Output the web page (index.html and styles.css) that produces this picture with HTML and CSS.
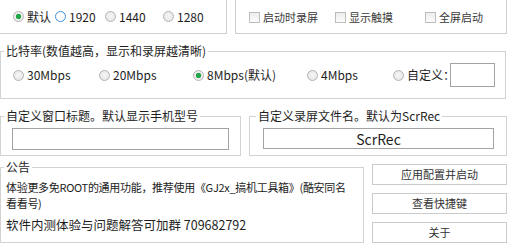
FILE: index.html
```html
<!DOCTYPE html>
<html lang="zh-CN">
<head>
<meta charset="utf-8">
<title>ScrRec</title>
<link rel="stylesheet" href="styles.css">
</head>
<body>
<div class="page">
  <div class="top">
    <div class="box box-res">
      <label class="opt res1"><span class="radio on"></span><span>默认</span></label>
      <label class="opt res2"><span class="radio focus"></span><span>1920</span></label>
      <label class="opt res3"><span class="radio"></span><span>1440</span></label>
      <label class="opt"><span class="radio"></span><span>1280</span></label>
    </div>
    <div class="box box-chk">
      <label class="opt chk1"><span class="check"></span><span>启动时录屏</span></label>
      <label class="opt chk2"><span class="check"></span><span>显示触摸</span></label>
      <label class="opt"><span class="check"></span><span>全屏启动</span></label>
    </div>
  </div>

  <fieldset class="group bitrate">
    <legend>比特率(数值越高，显示和录屏越清晰)</legend>
    <div class="bitrate-row">
      <label class="opt b1"><span class="radio"></span><span>30Mbps</span></label>
      <label class="opt b2"><span class="radio"></span><span>20Mbps</span></label>
      <label class="opt b3"><span class="radio on"></span><span>8Mbps(默认)</span></label>
      <label class="opt b4"><span class="radio"></span><span>4Mbps</span></label>
      <label class="opt b5"><span class="radio"></span><span>自定义：</span></label>
      <span class="field field-small"></span>
    </div>
  </fieldset>

  <div class="names">
    <fieldset class="group name-title">
      <legend>自定义窗口标题。默认显示手机型号</legend>
      <div class="field-wrap"><span class="field field-title"></span></div>
    </fieldset>
    <fieldset class="group name-file">
      <legend>自定义录屏文件名。默认为ScrRec</legend>
      <div class="field-wrap wide"><span class="field field-file">ScrRec</span></div>
    </fieldset>
  </div>

  <div class="bottom">
    <fieldset class="group notice">
      <legend>公告</legend>
      <div class="notice-body">
        <p class="small">体验更多免ROOT的通用功能，推荐使用《GJ2x_搞机工具箱》(酷安同名</p>
        <p class="small">看看号)</p>
        <p class="big">软件内测体验与问题解答可加群 709682792</p>
      </div>
    </fieldset>
    <div class="buttons">
      <button class="btn">应用配置并启动</button>
      <button class="btn">查看快捷键</button>
      <button class="btn">关于</button>
    </div>
  </div>
</div>
</body>
</html>
```

FILE: styles.css
```css
* { box-sizing: border-box; }
html, body { margin: 0; padding: 0; background: #fff; }
body {
  font-family: "Noto Sans CJK SC", "Noto Sans", sans-serif;
  font-size: 12px;
  color: #1e1e1e;
  width: 515px;
  height: 252px;
  overflow: hidden;
}
.page { width: 515px; }

.top { display: flex; height: 34px; gap: 8px; }
.box {
  height: 34px;
  border-right: 1px solid #cfcfcf;
  border-bottom: 1px solid #cfcfcf;
  display: flex;
  align-items: center;
}
.box-res { width: 227px; padding-left: 13px; }
.box-chk { width: 272px; border-left: 1px solid #cfcfcf; padding-left: 13px; font-size: 11px; color: #3a3a3a; padding-top: 1px; }

.opt { display: flex; align-items: center; gap: 2px; line-height: 16px; white-space: nowrap; }
.res1 { width: 42px; }
.res2 { width: 50px; }
.res3 { width: 58px; }
.chk1 { width: 86px; }
.chk2 { width: 90px; }
.box-chk .opt { gap: 3px; }

.radio {
  width: 11px; height: 11px;
  border-radius: 50%;
  border: 1px solid #b3b3b3;
  background: radial-gradient(circle at 50% 45%, #f6f6f6 0, #e2e2e2 100%);
  flex: none;
  margin-right: 1px;
}
.radio.on {
  background: radial-gradient(circle, #23a649 0, #23a649 2.4px, #f2f2f2 3.1px, #e6e6e6 100%);
}
.radio.focus {
  border-color: #3d8fdc;
  background: #fff;
}
.check {
  width: 11px; height: 11px;
  border: 1px solid #bdbdbd;
  background: linear-gradient(#ededed, #fbfbfb);
  flex: none;
}

.group {
  margin: 0;
  padding: 0;
  border: 1px solid #d2d2d2;
  min-width: 0;
}
.group legend {
  margin-left: 3px;
  padding: 0 2px;
  font-size: 12px;
  line-height: 16px;
  color: #1e1e1e;
}

.bitrate { width: 506px; margin-top: 9px; }
.bitrate-row {
  display: flex;
  align-items: center;
  padding: 4px 0 11px 12px;
  height: 39px;
}
.b1 { width: 86px; }
.b2 { width: 94px; }
.b3 { width: 114px; }
.b4 { width: 86px; }
.b5 { width: 57px; }

.field {
  display: flex;
  align-items: center;
  justify-content: center;
  border: 1px solid #a3a3a3;
  background: #fff;
  font-size: 14px;
  color: #1e1e1e;
}
.field-small { width: 45px; height: 24px; }

.names { display: flex; gap: 8px; margin-top: 9px; }
.name-title { width: 241px; }
.name-file { width: 258px; }
.name-file legend { margin-left: 6px; }
.field-wrap { padding: 4px 11px 5px 11px; }
.field-wrap.wide { padding: 4px 12px 6px 13px; }
.field-title { height: 22px; }
.field-file { height: 21px; }

.bottom { display: flex; align-items: flex-end; gap: 8px; margin-top: 3px; }
.notice { width: 364px; }
.notice-body { padding: 4px 4px 9px 5px; }
.notice-body p { margin: 0; }
.small { font-size: 11px; line-height: 16px; color: #222; white-space: nowrap; letter-spacing: -0.3px; }
.big { font-size: 12.5px; line-height: 16px; margin-top: 6px !important; color: #1e1e1e; white-space: nowrap; }

.buttons { width: 135px; display: flex; flex-direction: column; gap: 8px; }
.btn {
  height: 21px;
  border: 1px solid #cbcbcb;
  background: #fff;
  font-family: "Noto Sans CJK SC", "Noto Sans", sans-serif;
  font-size: 11px;
  color: #333;
  padding: 0;
  line-height: 19px;
}
```
